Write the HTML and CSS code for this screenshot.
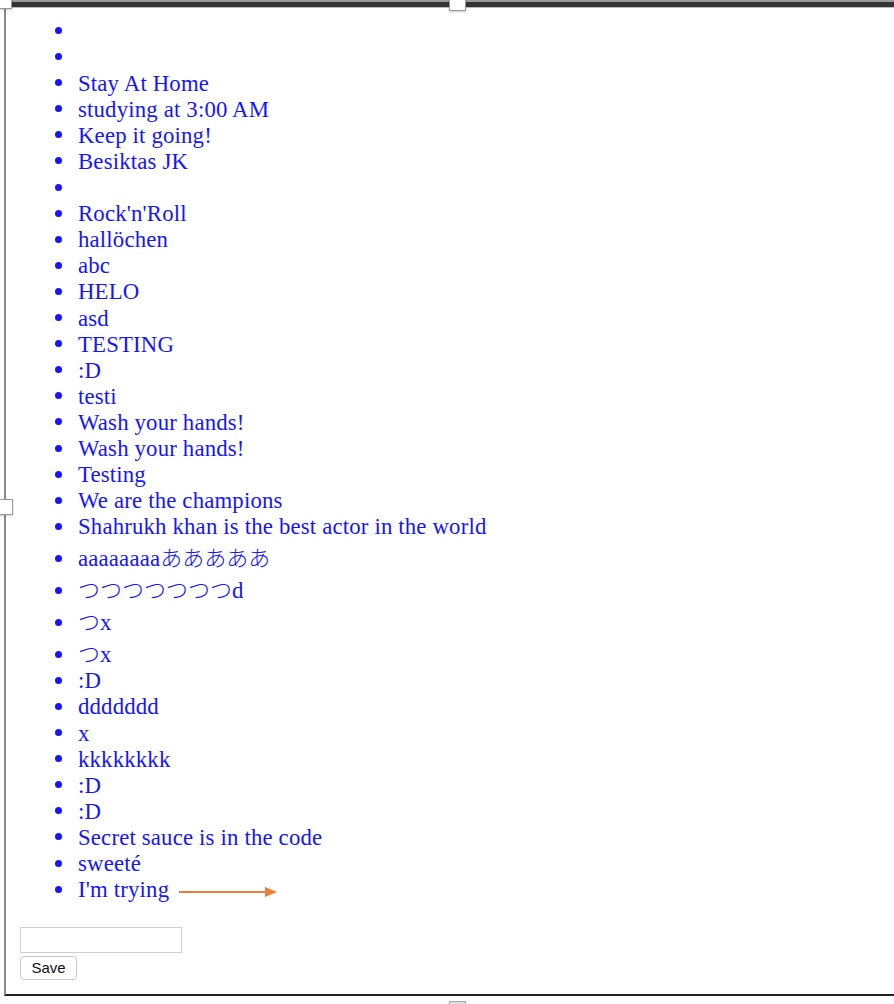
FILE: index.html
```html
<!DOCTYPE html>
<html>
<head>
<meta charset="utf-8">
<link rel="stylesheet" href="styles.css">
</head>
<body>
<div class="topbar"></div>
<div class="frame">
  <ul class="list">
    <li></li>
    <li></li>
    <li>Stay At Home</li>
    <li>studying at 3:00 AM</li>
    <li>Keep it going!</li>
    <li>Besiktas JK</li>
    <li></li>
    <li>Rock'n'Roll</li>
    <li>hallöchen</li>
    <li>abc</li>
    <li>HELO</li>
    <li>asd</li>
    <li>TESTING</li>
    <li>:D</li>
    <li>testi</li>
    <li>Wash your hands!</li>
    <li>Wash your hands!</li>
    <li>Testing</li>
    <li>We are the champions</li>
    <li>Shahrukh khan is the best actor in the world</li>
    <li>aaaaaaaa<span class="jp">あああああ</span></li>
    <li><span class="jp">つつつつつつつ</span>d</li>
    <li><span class="jp">つ</span>x</li>
    <li><span class="jp">つ</span>x</li>
    <li>:D</li>
    <li>ddddddd</li>
    <li>x</li>
    <li>kkkkkkkk</li>
    <li>:D</li>
    <li>:D</li>
    <li>Secret sauce is in the code</li>
    <li>sweeté</li>
    <li>I'm trying<svg class="arrow" width="100" height="12" viewBox="0 0 100 12"><line x1="0" y1="6" x2="88" y2="6" stroke="#e8803a" stroke-width="2"/><polygon points="86,1 98,6 86,11" fill="#e8803a"/></svg></li>
  </ul>
  <form class="form">
    <input class="field" type="text">
    <button class="save" type="button">Save</button>
  </form>
</div>
<div class="handle h-tl"></div>
<div class="handle h-tc"></div>
<div class="handle h-lm"></div>
<div class="handle h-bc"></div>
</body>
</html>
```

FILE: styles.css
```css
html, body {
  margin: 0;
  padding: 0;
  background: #fff;
  height: 100%;
  overflow: hidden;
}
body {
  position: relative;
  font-family: "Liberation Serif", "Noto Sans CJK JP", serif;
}
.topbar {
  height: 8px;
  background: linear-gradient(#9a9a9a 0, #9a9a9a 2px, #333 2px, #333 7px, #bbb 7px, #bbb 8px);
}
.frame {
  margin-left: 4px;
  border-left: 2px solid #8c8c8c;
  border-bottom: 2px solid #222;
  height: 988px;
  box-sizing: border-box;
  display: flex;
  flex-direction: column;
}
.list {
  margin: 10.5px 0 0 0;
  padding: 0 0 0 72px;
  font-size: 22.75px;
  letter-spacing: 0.18px;
  color: #1414ff;
  list-style: none;
}
.list li {
  min-height: 26.1px;
}
.list li::before {
  content: "";
  display: inline-block;
  width: 7px;
  height: 7px;
  border-radius: 50%;
  background: currentColor;
  margin-left: -23.5px;
  margin-right: 16.5px;
  vertical-align: 4.5px;
}
.jp {
  font-family: "Noto Sans CJK JP", sans-serif;
  font-size: 22px;
  font-weight: 300;
  letter-spacing: 0;
}
.arrow {
  margin-left: 10px;
  vertical-align: middle;
}
.form {
  margin: 23.5px 0 0 14px;
  display: flex;
  flex-direction: column;
  align-items: flex-start;
  gap: 3px;
}
.field {
  width: 162px;
  height: 26px;
  box-sizing: border-box;
  border: 1px solid #cfcfcf;
  margin: 0;
  padding: 2px 4px;
}
.save {
  width: 57px;
  height: 24px;
  box-sizing: border-box;
  margin: 0;
  border: 1px solid #cbcbcb;
  border-radius: 4px;
  background: #fff;
  font-family: "Liberation Sans", Arial, sans-serif;
  font-size: 15px;
  color: #111;
  padding: 0;
}
.handle {
  position: absolute;
  background: #fff;
  border: 1px solid #999;
  box-shadow: 0 1px 2px rgba(0,0,0,0.2);
}
.h-tl { left: -1px; top: -1px; width: 11px; height: 8px; }
.h-tc { left: 449px; top: -1px; width: 15px; height: 10px; }
.h-lm { left: -1px; top: 499px; width: 12px; height: 14px; }
.h-bc { left: 449px; top: 1001px; width: 15px; height: 10px; background: #ddd; border-color: #aaa; }
```
